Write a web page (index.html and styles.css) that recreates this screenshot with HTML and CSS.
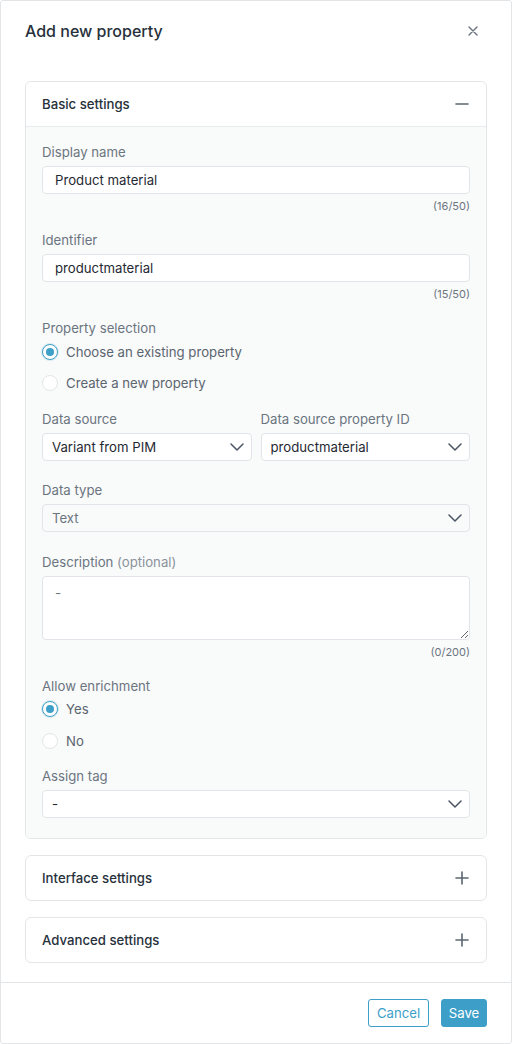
FILE: index.html
```html
<!DOCTYPE html>
<html lang="en">
<head>
<meta charset="utf-8">
<title>Add new property</title>
<link rel="stylesheet" href="styles.css">
</head>
<body>
<div class="modal">
  <div class="modal-header">
    <h1 class="modal-title">Add new property</h1>
    <button class="icon-btn close" aria-label="Close">
      <svg width="10" height="10" viewBox="0 0 10 10"><path d="M1 1L9 9M9 1L1 9" stroke="#6b7280" stroke-width="1.4" stroke-linecap="round"/></svg>
    </button>
  </div>

  <div class="modal-body">
    <section class="card open">
      <div class="card-header">
        <span>Basic settings</span>
        <svg width="14" height="14" viewBox="0 0 14 14"><path d="M1 7H13" stroke="#5b6570" stroke-width="1.6" stroke-linecap="round"/></svg>
      </div>
      <div class="card-body">
        <div class="field">
          <label class="label">Display name</label>
          <div class="input">Product material</div>
          <div class="counter">(16/50)</div>
        </div>
        <div class="field">
          <label class="label">Identifier</label>
          <div class="input">productmaterial</div>
          <div class="counter">(15/50)</div>
        </div>
        <div class="field">
          <label class="label">Property selection</label>
          <div class="radios">
            <div class="radio-row"><span class="radio checked"></span><span class="radio-text">Choose an existing property</span></div>
            <div class="radio-row"><span class="radio"></span><span class="radio-text">Create a new property</span></div>
          </div>
        </div>
        <div class="field sel row2">
          <div class="col">
            <label class="label">Data source</label>
            <div class="select"><span>Variant from PIM</span>
              <svg class="chev" width="14" height="8" viewBox="0 0 14 8"><path d="M1 1L7 7L13 1" fill="none" stroke="#4b5563" stroke-width="1.5" stroke-linecap="round" stroke-linejoin="round"/></svg>
            </div>
          </div>
          <div class="col">
            <label class="label">Data source property ID</label>
            <div class="select"><span>productmaterial</span>
              <svg class="chev" width="14" height="8" viewBox="0 0 14 8"><path d="M1 1L7 7L13 1" fill="none" stroke="#4b5563" stroke-width="1.5" stroke-linecap="round" stroke-linejoin="round"/></svg>
            </div>
          </div>
        </div>
        <div class="field sel wide">
          <label class="label">Data type</label>
          <div class="select disabled"><span>Text</span>
            <svg class="chev" width="14" height="8" viewBox="0 0 14 8"><path d="M1 1L7 7L13 1" fill="none" stroke="#4b5563" stroke-width="1.5" stroke-linecap="round" stroke-linejoin="round"/></svg>
          </div>
        </div>
        <div class="field">
          <label class="label">Description <span class="optional">(optional)</span></label>
          <textarea class="textarea" placeholder="-"></textarea>
          <div class="counter">(0/200)</div>
        </div>
        <div class="field tight-field">
          <label class="label">Allow enrichment</label>
          <div class="radios tight">
            <div class="radio-row"><span class="radio checked"></span><span class="radio-text">Yes</span></div>
            <div class="radio-row"><span class="radio"></span><span class="radio-text">No</span></div>
          </div>
        </div>
        <div class="field last">
          <label class="label">Assign tag</label>
          <div class="select"><span>-</span>
            <svg class="chev" width="14" height="8" viewBox="0 0 14 8"><path d="M1 1L7 7L13 1" fill="none" stroke="#4b5563" stroke-width="1.5" stroke-linecap="round" stroke-linejoin="round"/></svg>
          </div>
        </div>
      </div>
    </section>

    <section class="card">
      <div class="card-header">
        <span>Interface settings</span>
        <svg width="14" height="14" viewBox="0 0 14 14"><path d="M1 7H13M7 1V13" stroke="#5b6570" stroke-width="1.6" stroke-linecap="round"/></svg>
      </div>
    </section>

    <section class="card">
      <div class="card-header">
        <span>Advanced settings</span>
        <svg width="14" height="14" viewBox="0 0 14 14"><path d="M1 7H13M7 1V13" stroke="#5b6570" stroke-width="1.6" stroke-linecap="round"/></svg>
      </div>
    </section>
  </div>

  <div class="modal-footer">
    <button class="btn btn-outline">Cancel</button>
    <button class="btn btn-primary">Save</button>
  </div>
</div>
</body>
</html>
```
FILE: styles.css
```css
* { box-sizing: border-box; }
html, body { margin: 0; padding: 0; }
body {
  font-family: Inter, "Noto Sans", "Liberation Sans", sans-serif;
  color: #1f2933;
  background: #fff;
}
.modal {
  width: 512px;
  height: 1044px;
  border: 1px solid #e3e6e9;
  border-radius: 3px;
  display: flex;
  flex-direction: column;
  background: #fff;
}
.modal-header {
  display: flex;
  align-items: center;
  justify-content: space-between;
  padding: 19px 24px 19px 24px;
}
.modal-title {
  margin: 0;
  font-size: 16px;
  line-height: 22px;
  font-weight: 450;
  color: #27313b;
}
.icon-btn {
  border: 0;
  background: none;
  padding: 0;
  width: 20px;
  height: 20px;
  display: flex;
  align-items: center;
  justify-content: center;
  margin-right: 4px;
}
.modal-body {
  flex: 1;
  padding: 20px 24px 0 24px;
  display: flex;
  flex-direction: column;
  gap: 16px;
}
.card {
  border: 1px solid #e3e6e9;
  border-radius: 6px;
  background: #fff;
  overflow: hidden;
}
.card-header {
  height: 44px;
  display: flex;
  align-items: center;
  justify-content: space-between;
  padding: 0 17px 0 16px;
  font-size: 13.2px;
  font-weight: 450;
  color: #27313b;
}
.card.open .card-header {
  height: 45px;
  border-bottom: 1px solid #e9ecef;
}
.card-body {
  background: #f9fafa;
  padding: 15px 16px 20px 16px;
  display: flex;
  flex-direction: column;
}
.field { display: flex; flex-direction: column; margin-bottom: 16px; }
.field.sel { margin-bottom: 19px; }
.field.sel.wide { margin-bottom: 20px; }
.field.tight-field { margin-bottom: 15px; }
.field.last { margin-bottom: 0; }
.label {
  font-size: 13.2px;
  line-height: 20px;
  color: #6b7580;
  margin-bottom: 4px;
}
.optional { color: #8a939c; }
.input, .select {
  height: 28px;
  border: 1px solid #e1e4e8;
  border-radius: 4px;
  background: #fff;
  font-size: 13.2px;
  color: #1f2933;
  display: flex;
  align-items: center;
}
.input { padding: 0 12px; }
.select { padding: 0 7px 0 9px; justify-content: space-between; }
.select.disabled { background: #f9fafa; color: #6b7580; }
.chev { flex: none; }
.counter {
  font-size: 11px;
  line-height: 16px;
  color: #6b7580;
  text-align: right;
  margin-top: 4px;
}
.textarea {
  height: 64px;
  border: 1px solid #e1e4e8;
  border-radius: 4px;
  background: #fff;
  font-family: inherit;
  font-size: 13.2px;
  padding: 8px 12px;
  color: #1f2933;
  resize: vertical;
  outline: none;
  display: block;
}
.textarea::placeholder { color: #6b7580; }
.radios { display: flex; flex-direction: column; gap: 11px; }
.radios.tight { margin-top: -1px; gap: 12px; }
.radio-row { display: flex; align-items: center; height: 20px; gap: 8px; }
.radio {
  width: 16px;
  height: 16px;
  border-radius: 50%;
  border: 1px solid #e3e6e9;
  background: #fff;
  flex: none;
  position: relative;
}
.radio.checked {
  border: 1.5px solid #3d9fc8;
  box-shadow: 0 0 0 1px rgba(61,159,200,0.18);
}
.radio.checked::after {
  content: "";
  position: absolute;
  left: 50%;
  top: 50%;
  width: 8px;
  height: 8px;
  margin: -4px 0 0 -4px;
  border-radius: 50%;
  background: #3d9fc8;
}
.radio-text { font-size: 13.2px; color: #5b6570; }
.row2 { flex-direction: row; gap: 9px; }
.row2 .col { flex: 1; display: flex; flex-direction: column; min-width: 0; }
.modal-footer {
  border-top: 1px solid #e3e6e9;
  padding: 16px 24px 16px 24px;
  display: flex;
  justify-content: flex-end;
  gap: 12px;
}
.btn {
  height: 28px;
  border-radius: 3px;
  font-family: inherit;
  font-size: 13.2px;
  padding: 0 6px;
  cursor: pointer;
}
.btn-outline {
  background: #fff;
  border: 1px solid #3d9fc8;
  color: #3d9fc8;
  width: 61px;
}
.btn-primary {
  background: #3d9fc8;
  border: 1px solid #3d9fc8;
  color: #fff;
  width: 46px;
}
```
